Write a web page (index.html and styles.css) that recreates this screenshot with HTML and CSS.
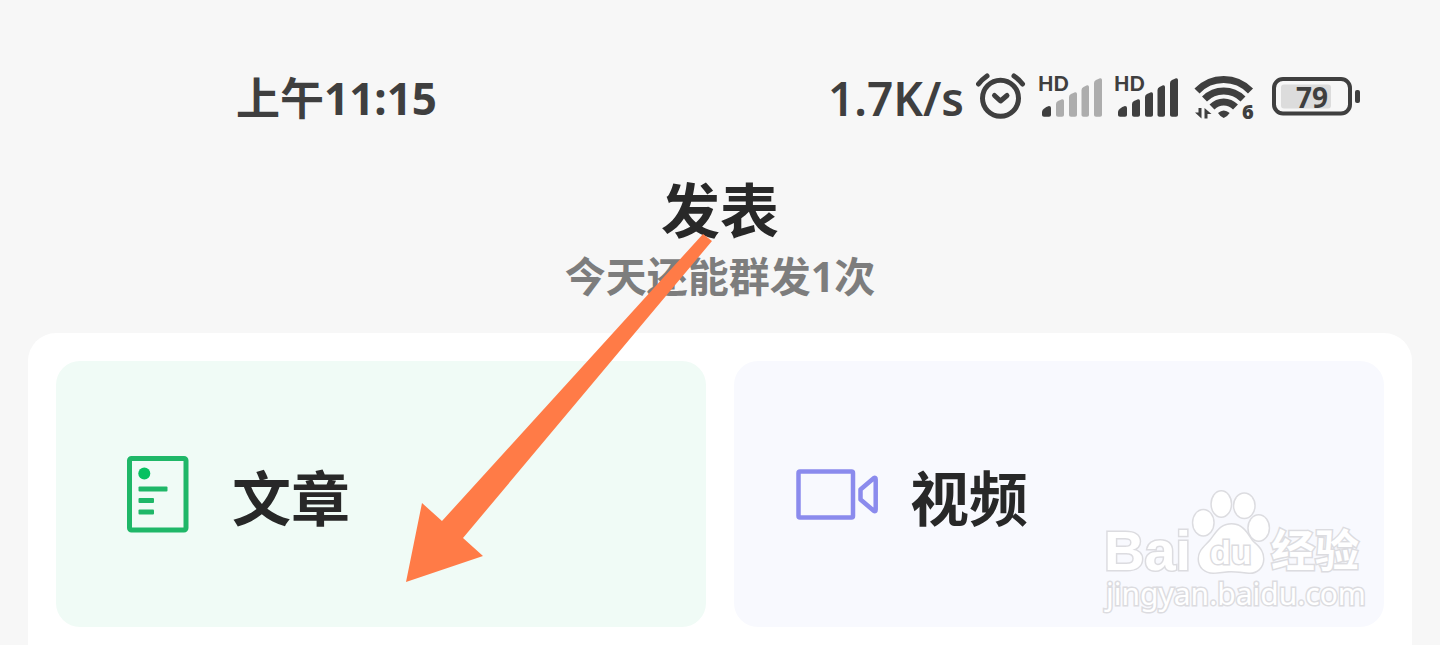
FILE: index.html
```
<!DOCTYPE html>
<html lang="zh-CN">
<head>
    <meta charset="UTF-8">
    <meta name="viewport" content="width=device-width, initial-scale=1.0">
    <title>发表</title>
    <link rel="stylesheet" href="styles.css">
</head>
<body>
    <div class="page">
        <div class="status-bar">
            <span class="time">上午11:15</span>
            <div class="status-icons">
                <span class="speed">1.7K/s</span>
                <!-- alarm -->
                <svg width="50" height="56" viewBox="0 0 50 56" fill="none" stroke="#3f3f3f" stroke-width="5" stroke-linecap="round" stroke-linejoin="round">
                    <circle cx="24.5" cy="28.3" r="18"/>
                    <path d="M18.5 25.5l6 5.5 6.5-5.5"/>
                    <path d="M2.500 14Q6 9.500 11 6M46.500 14Q43 9.500 38 6"/>
                </svg>
                <!-- sim 1 -->
                <svg width="64" height="56" viewBox="0 0 64 56" fill="#3f3f3f">
                    <text class="hd" x="0" y="21">HD</text>
                    <path d="M4 41.500Q5 38 11 36Q13 36 13 38V45Q13 46.700 11 46.700H6Q4 46.700 4 45Z"/>
                    <g fill="#adadad">
                        <path d="M18 34Q18 32 20 31L24 29.300Q26 29 26 31V45Q26 46.700 24 46.700H20Q18 46.700 18 45Z"/>
                        <path d="M31 27Q31 25 33 24L37 22.300Q39 22 39 24V45Q39 46.700 37 46.700H33Q31 46.700 31 45Z"/>
                        <path d="M43.500 20Q43.500 18 45.500 17L49 15.300Q51 15 51 17V45Q51 46.700 49 46.700H45.500Q43.500 46.700 43.500 45Z"/>
                        <path d="M56 13Q56 11 58 10L62 8.300Q64 8 64 10V45Q64 46.700 62 46.700H58Q56 46.700 56 45Z"/>
                    </g>
                </svg>
                <!-- sim 2 -->
                <svg width="64" height="56" viewBox="0 0 64 56" fill="#3f3f3f">
                    <text class="hd" x="0" y="21">HD</text>
                    <path d="M4 41.500Q5 38 11 36Q13 36 13 38V45Q13 46.700 11 46.700H6Q4 46.700 4 45Z"/>
                    <path d="M18 34Q18 32 20 31L24 29.300Q26 29 26 31V45Q26 46.700 24 46.700H20Q18 46.700 18 45Z"/>
                    <path d="M31 27Q31 25 33 24L37 22.300Q39 22 39 24V45Q39 46.700 37 46.700H33Q31 46.700 31 45Z"/>
                    <path d="M43.500 20Q43.500 18 45.500 17L49 15.300Q51 15 51 17V45Q51 46.700 49 46.700H45.500Q43.500 46.700 43.500 45Z"/>
                    <path d="M56 13Q56 11 58 10L62 8.300Q64 8 64 10V45Q64 46.700 62 46.700H58Q56 46.700 56 45Z"/>
                </svg>
                <!-- wifi -->
                <svg width="66" height="56" viewBox="0 0 66 56" fill="#3f3f3f">
                    <g fill="none" stroke="#3f3f3f" stroke-width="7">
                        <path d="M7 21Q18 9.500 33.700 9.500T60.500 21"/>
                        <path d="M14.500 29Q22.500 21 33.700 21T53 29"/>
                        <path d="M22 37Q27 32 33.700 32T45.500 37"/>
                    </g>
                    <path d="M28 43Q33.700 38 39.700 43Q37 47 33.700 48Q30.500 47 28 43Z"/>
                    <path d="M8.500 38H11.500V48.500L5 42.500H8.500ZM14.500 48.500V38L21.500 44H17.500V48.500Z"/>
                    <text class="wifi-num" x="52" y="49">6</text>
                </svg>
                <!-- battery -->
                <svg width="92" height="56" viewBox="0 0 92 56" fill="#3f3f3f">
                    <rect x="6" y="9" width="76" height="34.500" rx="9" fill="none" stroke="#3f3f3f" stroke-width="4"/>
                    <rect x="13" y="14.500" width="50" height="24" rx="3" fill="#dcdcdc"/>
                    <rect x="87" y="20" width="5" height="13" rx="2"/>
                    <text class="battery-num" x="28" y="38">79</text>
                </svg>
            </div>
        </div>

        <header class="header">
            <h1>发表</h1>
            <p>今天还能群发1次</p>
        </header>

        <main class="panel">
            <button class="card article" type="button">
                <span class="card-icon">
                    <svg width="62" height="78" viewBox="0 0 62 78" fill="#1fb768">
                        <rect x="2.500" y="3.500" width="56.500" height="71.500" rx="2" fill="none" stroke="#1fb768" stroke-width="5"/>
                        <circle cx="17.300" cy="18.500" r="6" fill="#07c160"/>
                        <rect x="11.500" y="31.500" width="29" height="5" rx="1"/>
                        <rect x="11.500" y="43" width="15.500" height="5" rx="1"/>
                        <rect x="11.500" y="54.500" width="15.500" height="5" rx="1"/>
                    </svg>
                </span>
                <span class="card-label">文章</span>
            </button>
            <button class="card video" type="button">
                <span class="card-icon">
                    <svg width="84" height="52" viewBox="0 0 84 52" fill="none" stroke="#8b8bed" stroke-width="4.500" stroke-linejoin="round">
                        <rect x="4.500" y="3.500" width="54.500" height="46" rx="1.500"/>
                        <path d="M66.500 21.500L79.700 10.200Q81.700 9 81.700 11.500V41.500Q81.700 44 79.700 42.800L66.500 31.500Z"/>
                    </svg>
                </span>
                <span class="card-label">视频</span>
            </button>
        </main>

        <svg class="arrow" width="310" height="352" viewBox="0 0 310 352">
            <path d="M1 350L17 271L37 289L298 2L307 9L58 306L78 324Z" fill="#ff7b47"/>
        </svg>

        <svg class="watermark" width="270" height="140" viewBox="0 0 270 140">
            <text class="wm-bai" x="4" y="90">Bai</text>
            <ellipse cx="121.300" cy="24" rx="9.500" ry="12.500"/>
            <ellipse cx="144.300" cy="25.700" rx="10" ry="12"/>
            <ellipse cx="103.300" cy="42.700" rx="10" ry="12.500"/>
            <ellipse cx="158.700" cy="48" rx="10" ry="12.500"/>
            <path d="M131.500 44.500C143 44.500 147 54 152 61C158 67 163 70 163 79C163 88 156 93 149 92.500C142 92 138 91 131 91C124 91 120 92.500 113 92.500C105 92.500 99 87 99 79C99 70 106 66 111 60C116 54 120 44.500 131.500 44.500Z"/>
            <text class="wm-du" x="110" y="84">du</text>
            <text class="wm-cn" x="171" y="87">经验</text>
            <text class="wm-url" x="6" y="125">jingyan.baidu.com</text>
        </svg>
    </div>
</body>
</html>
```

FILE: styles.css
```
* {
    margin: 0;
    padding: 0;
    box-sizing: border-box;
}

body {
    background: #f7f7f7;
    color: #282828;
    font-family: "Noto Sans", "Noto Sans CJK SC", sans-serif;
}

.page {
    position: relative;
    display: flex;
    flex-direction: column;
    min-height: 100vh;
}

.status-bar {
    display: flex;
    justify-content: space-between;
    align-items: center;
    padding: 70px 80px 0 236px;
    color: #3f3f3f;
    font-weight: bold;
    line-height: 56px;
}

.time {
    font-size: 44px;
}

.status-icons {
    display: flex;
    align-items: center;
    gap: 12px;
}

.speed {
    font-size: 46px;
    font-weight: 600;
}

.hd {
    font: 900 20px Lato, sans-serif;
}

.wifi-num {
    font: 800 20px "Open Sans", sans-serif;
}

.battery-num {
    font: bold 28px "Noto Sans", sans-serif;
}

.header {
    padding: 50px 28px 24px;
    text-align: center;
}

.header h1 {
    font-size: 59px;
    font-weight: bold;
    line-height: 68px;
}

.header p {
    color: #7d7d7d;
    font-size: 41px;
    font-weight: bold;
    line-height: 65px;
}

.panel {
    flex: 1;
    display: grid;
    grid-template-columns: 1fr 1fr;
    align-items: start;
    gap: 28px;
    margin: 0 28px;
    padding: 28px 28px 0;
    background: #fff;
    border-radius: 28px 28px 0 0;
}

.card {
    display: flex;
    align-items: center;
    gap: 32px;
    padding: 88px 60px;
    border: none;
    border-radius: 24px;
    color: #282828;
    font-family: inherit;
    cursor: pointer;
}

.article {
    background: #f0fbf6;
}

.video {
    background: #f8f9fe;
}

.card-icon {
    display: flex;
    justify-content: center;
    width: 84px;
}

.card-label {
    padding-top: 8px;
    font-size: 59px;
    font-weight: bold;
    line-height: 82px;
}

.arrow {
    position: absolute;
    top: 232px;
    left: calc(50% - 315px);
    pointer-events: none;
}

.watermark {
    position: absolute;
    top: 480px;
    right: 70px;
    fill: #fff;
    stroke: #dcdce0;
    stroke-width: 3px;
    paint-order: stroke;
    pointer-events: none;
}

.wm-bai {
    font: bold 56px "Liberation Sans", sans-serif;
}

.wm-du {
    font: bold 34px "Liberation Sans", sans-serif;
}

.wm-cn {
    font: bold 44px "Noto Sans CJK SC", sans-serif;
}

.wm-url {
    font: 30px "Noto Sans", sans-serif;
}
```
